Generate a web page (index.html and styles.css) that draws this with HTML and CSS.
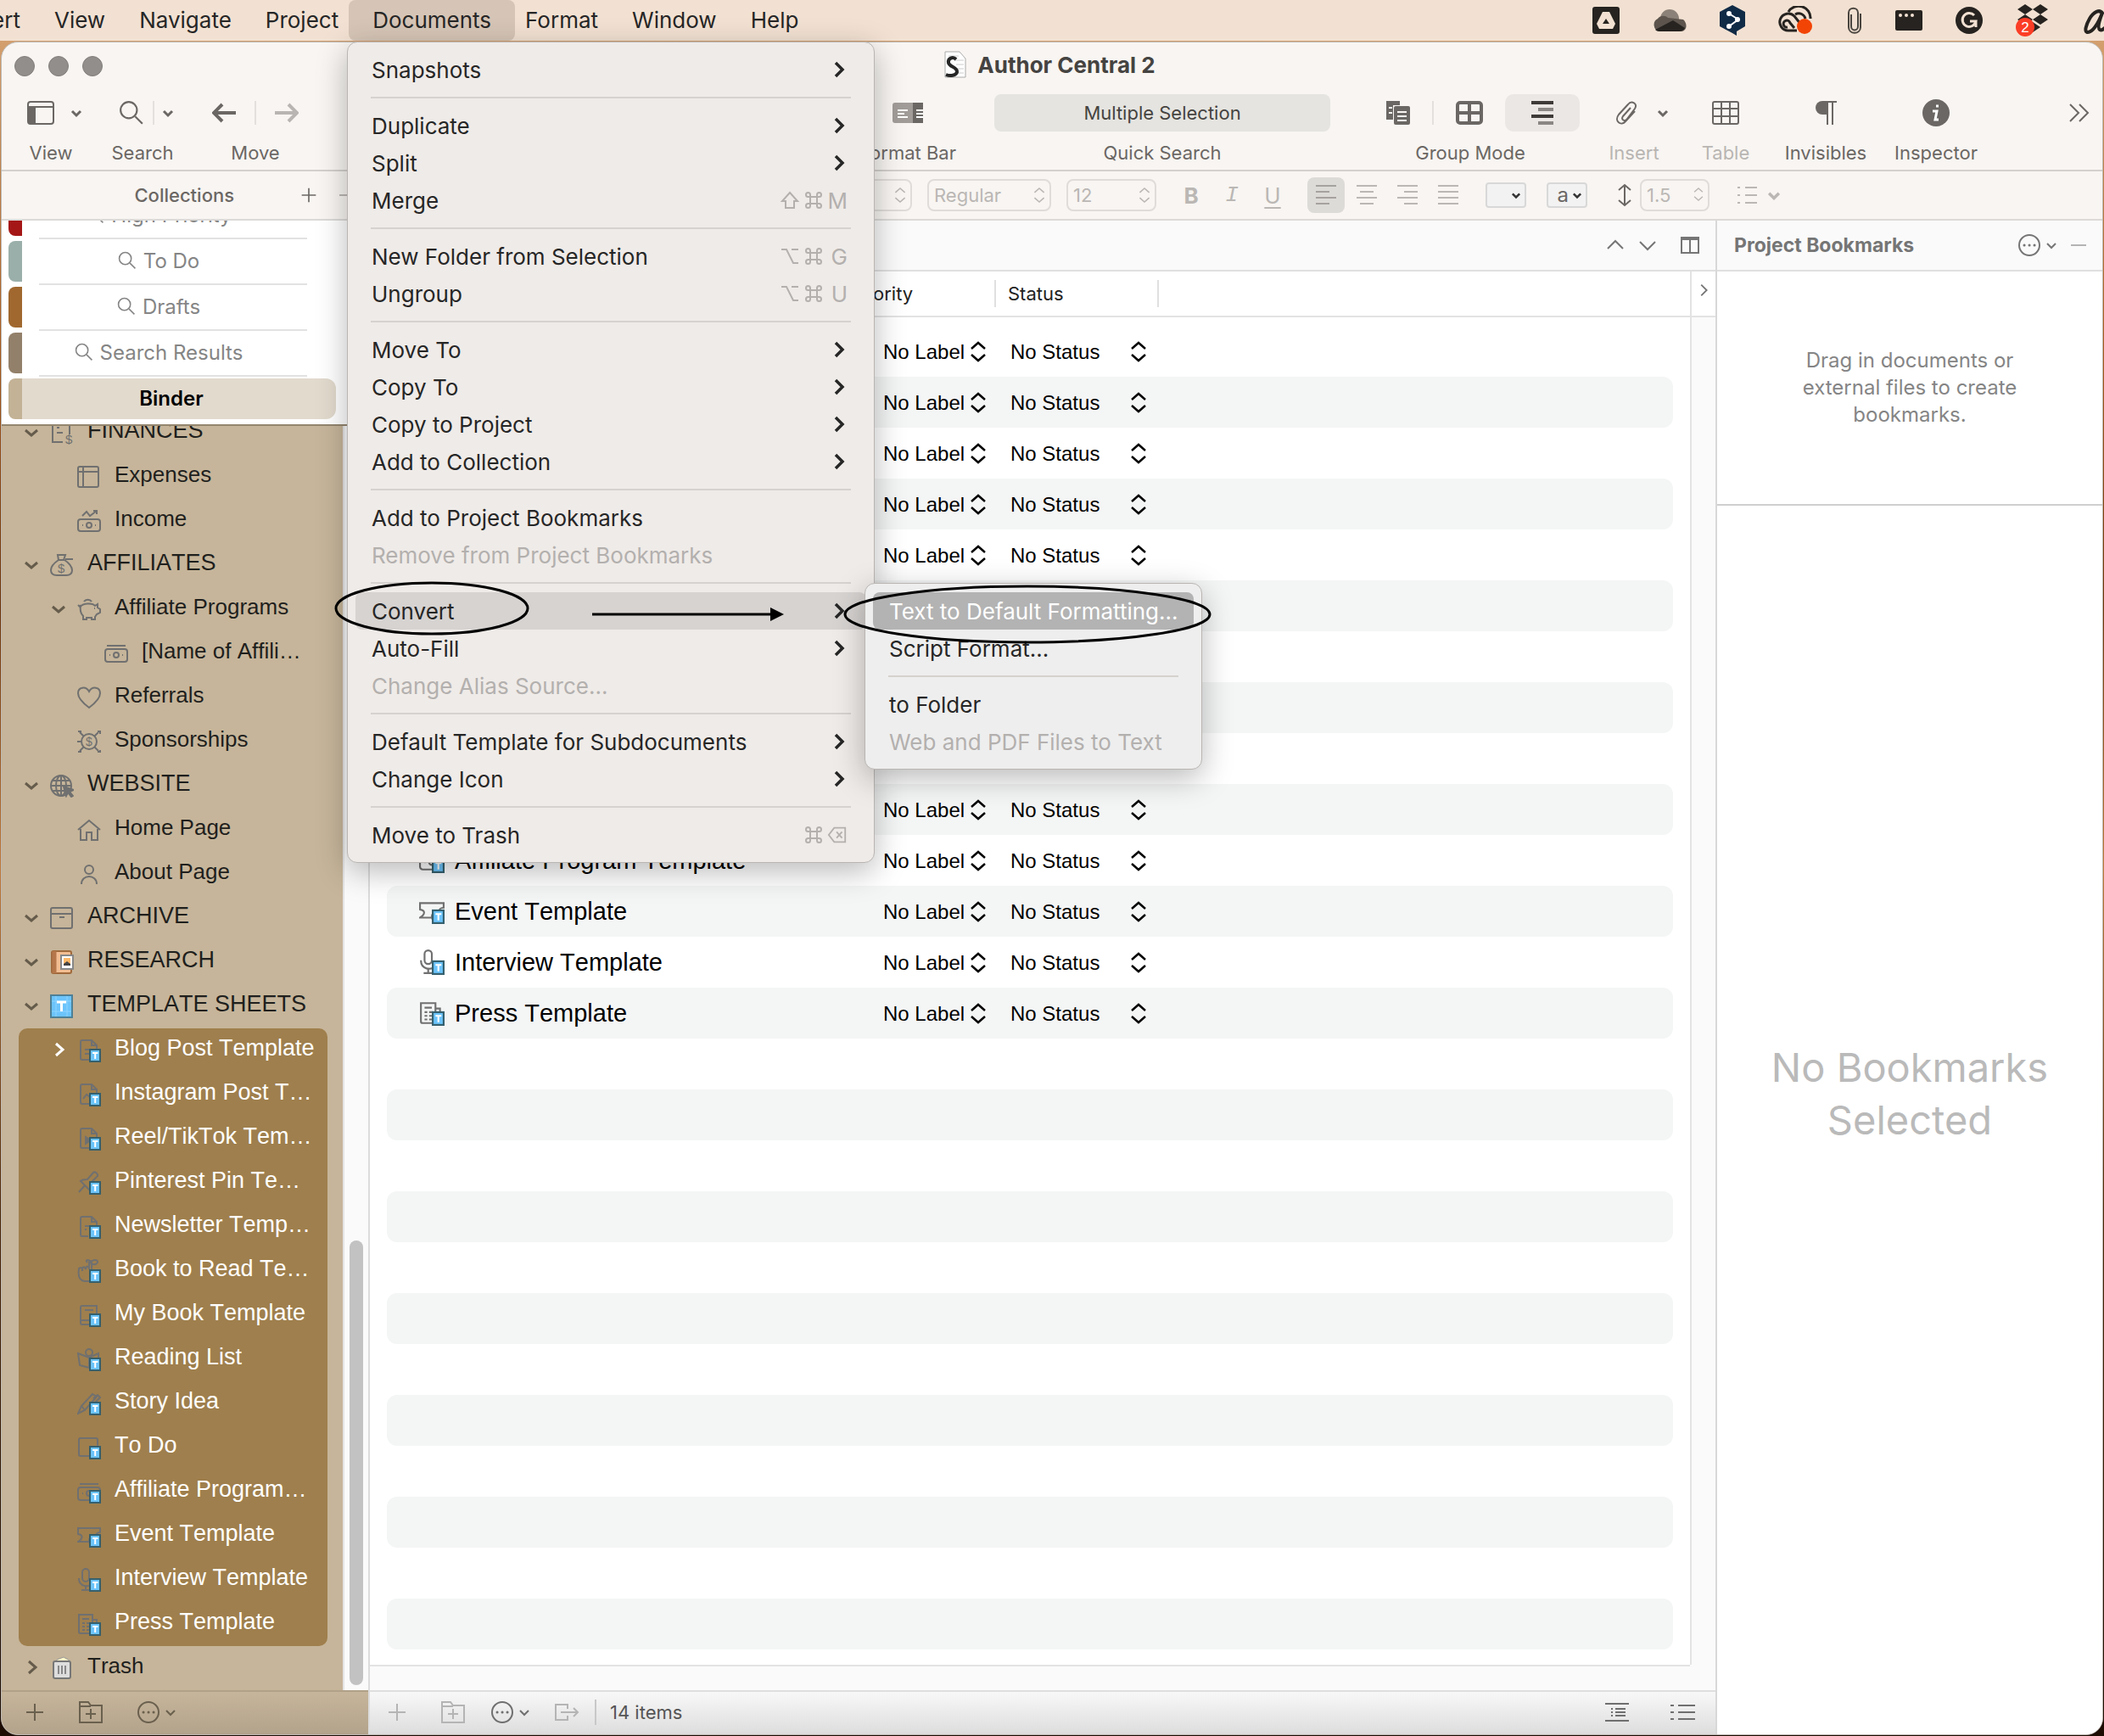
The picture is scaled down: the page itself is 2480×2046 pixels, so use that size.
FILE: index.html
```html
<!DOCTYPE html>
<html lang="en">
<head>
<meta charset="utf-8">
<title>Author Central 2</title>
<link rel="stylesheet" href="styles.css">
</head>
<body>
<svg class="symbols" aria-hidden="true">
  <symbol id="down" viewBox="0 0 24 24"><path d="M7 10l5 5 5-5"/></symbol>
  <symbol id="right" viewBox="0 0 24 24"><path d="M9 5l7 7-7 7"/></symbol>
  <symbol id="opened" viewBox="0 0 28 28"><path d="M7 11l7 6 7-6"/></symbol>
  <symbol id="closed" viewBox="0 0 28 28"><path d="M11 6l8 7-8 7"/></symbol>
  <symbol id="submenu-arrow" viewBox="0 0 24 24"><path d="M8 4l8 8-8 8"/></symbol>
  <symbol id="updown" viewBox="0 0 20 28"><path d="M3 10l7-6 7 6M3 18l7 6 7-6"/></symbol>
  <symbol id="picker" viewBox="0 0 20 28"><path d="M2 11l8-7 8 7M2 18l8 7 8-7"/></symbol>
  <symbol id="glass" viewBox="0 0 28 28"><circle cx="11" cy="11" r="9"/><path d="M18 18l8 8"/></symbol>
  <symbol id="plus" viewBox="0 0 24 24"><path d="M2 12h20M12 2v20"/></symbol>
  <symbol id="dots" viewBox="0 0 28 28"><circle cx="14" cy="14" r="12"/><path class="dot" d="M8 14h.1M14 14h.1M20 14h.1"/></symbol>
  <symbol id="addfolder" viewBox="0 0 30 28"><path d="M2 26V2h10l3 4h13v20zM2 7h13M15 10v12M9 16h12"/></symbol>
  <symbol id="cmd" viewBox="0 0 24 24"><path d="M8 8V5.500a2.500 2.500 0 1 0-2.500 2.500H18.500a2.500 2.500 0 1 0-2.500-2.500V18.500a2.500 2.500 0 1 0 2.500-2.500H5.500a2.500 2.500 0 1 0 2.500 2.500z"/></symbol>
  <symbol id="shift" viewBox="0 0 24 24"><path d="M12 3l9 10h-4v8H7v-8H3z"/></symbol>
  <symbol id="opt" viewBox="0 0 24 24"><path d="M2 4h6l8 16h6M14 4h8"/></symbol>
  <symbol id="del" viewBox="0 0 26 24"><path d="M9 3h14v18H9l-7-9zM12 8l7 8M19 8l-7 8"/></symbol>
  <symbol id="lines" viewBox="0 0 26 26"><path d="M1 2h24M1 9h16M1 16h24M1 23h16"/></symbol>

  <symbol id="t" viewBox="0 0 28 28"><rect x="15" y="13" width="12" height="14" fill="#6cc4fb" stroke="#35606e" stroke-width="2"/><path d="M18 17h6.500M21.200 17v7" stroke="#fff" stroke-width="2"/></symbol>
  <symbol id="i-ledger" viewBox="0 0 28 28"><path d="M15 25H3V3h20v13M8 8h3M8 14h7"/><text x="18" y="27" font-size="15">$</text></symbol>
  <symbol id="i-table" viewBox="0 0 28 28"><rect x="1" y="2" width="24" height="24" rx="2"/><path d="M1 8h24M7 2v24"/></symbol>
  <symbol id="i-income" viewBox="0 0 28 28"><rect x="1" y="12" width="26" height="14" rx="3"/><circle cx="14" cy="19" r="3"/><path d="M6 19h1M21 19h1M6 8l5-5 4 5 8-6M19 2h4v4"/></symbol>
  <symbol id="i-bag" viewBox="0 0 28 28"><path d="M10 8C4 12 1 16 1 20c0 4 3 6 7 6h11c4 0 7-2 7-6s-4-9-9-12zM9 2h9l-2 6h-6zM18 7h9"/><text x="9" y="23" font-size="15">$</text></symbol>
  <symbol id="i-pig" viewBox="0 0 28 28"><path d="M4 11c2-4 14-5 17-1l3-2v4l3 2v4l-4 2-2 3v3h-4v-2h-6v2H7v-4c-3-3-4-7-3-13zM4 12L1 9M8 5c2-3 7-3 9 0M20 13h1"/></symbol>
  <symbol id="i-cash" viewBox="0 0 28 28"><rect x="1" y="9" width="26" height="15" rx="3"/><circle cx="14" cy="16" r="3"/><path d="M6 16h1M21 16h1M3 5h22"/></symbol>
  <symbol id="i-heart" viewBox="0 0 28 28"><path d="M14 26C6 20 1 15 1 9c0-7 9-9 13-2 4-7 13-5 13 2 0 6-5 11-13 17z"/></symbol>
  <symbol id="i-sponsor" viewBox="0 0 28 28"><circle cx="14" cy="14" r="9"/><path d="M0 14h5M3 3l5 5M25 3l-5 5M3 25l5-5M25 25l-5-5M1 2h3v3M24 2h3v3M1 26h3v-2M24 26h3v-2"/><text x="10" y="19" font-size="14">$</text></symbol>
  <symbol id="i-globe" viewBox="0 0 28 28"><circle cx="13" cy="14" r="12"/><ellipse cx="13" cy="14" rx="6" ry="12"/><path d="M13 2v24M1 14h24M3 8h20M3 20h20"/><path d="M16 15l12 4-5 2 4 5-2 1-4-5-2 4z" fill="#707070"/></symbol>
  <symbol id="i-home" viewBox="0 0 28 28"><path d="M1 14L14 3l13 11M4 13v13h7v-9h6v9h7V13"/></symbol>
  <symbol id="i-person" viewBox="0 0 28 28"><circle cx="14" cy="9" r="5"/><path d="M5 26c0-12 18-12 18 0"/></symbol>
  <symbol id="i-archive" viewBox="0 0 28 28"><rect x="1" y="2" width="25" height="24" rx="2"/><path d="M1 9h25M11 13h6"/></symbol>
  <symbol id="i-research" viewBox="0 0 28 28"><rect x="2" y="1" width="23" height="26" rx="2" fill="#f2bd92" stroke="#a06a3c"/><path d="M5 1v26" stroke="#b5774a" stroke-width="5"/><rect x="13" y="6" width="14" height="16" fill="#fff" stroke="#888"/><path d="M16 9h8v9h-8z" fill="#fcb96a" stroke="none"/><path d="M16 18v-2l4-3 4 3v2z" fill="#444" stroke="none"/></symbol>
  <symbol id="i-sheet" viewBox="0 0 28 28"><rect x="1" y="1" width="25" height="26" fill="#6cc4fb" stroke="#4f8096"/><path d="M7 2v24M20 2v24M2 8h23M2 20h23" stroke="#8fd4ff" stroke-width="1"/><path d="M8 9h11M13.500 9v11" stroke="#fff" stroke-width="3"/></symbol>
  <symbol id="i-doc" viewBox="0 0 28 28"><path d="M16 25H6a2 2 0 0 1-2-2V4a2 2 0 0 1 2-2h11l6 6v6M17 2v6h6M9 13h8M9 18h5"/></symbol>
  <symbol id="i-image" viewBox="0 0 28 28"><path d="M16 25H6a2 2 0 0 1-2-2V4a2 2 0 0 1 2-2h11l6 6v6M17 2v6h6M7 19l4-5 4 3"/></symbol>
  <symbol id="i-play" viewBox="0 0 28 28"><path d="M16 25H6a2 2 0 0 1-2-2V4a2 2 0 0 1 2-2h11l6 6v6M17 2v6h6"/><path d="M10 12l6 4-6 4z" fill="#707070"/></symbol>
  <symbol id="i-pin" viewBox="0 0 28 28"><path d="M2 25l7-8M15 23L4 12c2-2 5-2 8-2l7-8c2-2 6 2 5 4l-8 8"/></symbol>
  <symbol id="i-news" viewBox="0 0 28 28"><path d="M13 25H6a2 2 0 0 1-2-2V4a2 2 0 0 1 2-2h11l6 6v6M17 2v6h6M9 13h8M9 17h2"/></symbol>
  <symbol id="i-hand" viewBox="0 0 28 28"><path d="M14 26H9c-8-1-8-9-7-15 3-2 4-1 4 3 0-6 3-6 4-2 1-5 4-4 4 0V5c0-4 3-4 3 0v8M12 4c-4-4 3-4 4 0 2-4 9-4 8 0-2 3-6 3-8 0"/></symbol>
  <symbol id="i-book" viewBox="0 0 28 28"><path d="M14 25H6a2 2 0 0 1-2-2V5a2 2 0 0 1 2-2h17v11M5 20h9M9 8h10"/></symbol>
  <symbol id="i-reader" viewBox="0 0 28 28"><circle cx="14" cy="6" r="4"/><path d="M14 24V12L1 7l2 14 11 3M14 12l11-5v7"/></symbol>
  <symbol id="i-pencils" viewBox="0 0 28 28"><path d="M1 26l4-9L18 3l5 3L9 22zM5 17l4 5M19 8l5-4 3 3-9 9"/></symbol>
  <symbol id="i-rect" viewBox="0 0 28 28"><path d="M14 24H4a2 2 0 0 1-2-2V5a2 2 0 0 1 2-2h18a2 2 0 0 1 2 2v9"/></symbol>
  <symbol id="i-ticket" viewBox="0 0 28 28"><path d="M14 21H1c6-4 6-8 0-9V5h26v5c-3 0-5 2-5 4M17 14c-4 4-4 8 0 12"/></symbol>
  <symbol id="i-mic" viewBox="0 0 28 28"><rect x="6" y="1" width="8" height="15" rx="4"/><path d="M2 12c0 11 12 10 13 8M10 20v6M5 26h9"/></symbol>
  <symbol id="i-press" viewBox="0 0 28 28"><path d="M14 25H4a2 2 0 0 1-2-2V3h16v10M18 9h5v5M6 8h8M6 13h3M11 13h4M6 17h3M11 17h3M6 21h3M11 21h3"/></symbol>
  <symbol id="i-trash" viewBox="0 0 28 28"><path d="M8 4l8-3 7 4v3H7z" fill="#fff6c8" stroke="#999" stroke-width="1"/><rect x="4" y="6" width="20" height="20" rx="2" fill="#ddd" stroke="#777"/><path d="M10 11v10M14 11v10M18 11v10" stroke="#888"/></symbol>
</svg>

<header class="menubar">
  <nav class="menus" aria-label="Menu bar">
    <button>Insert</button><button>View</button><button>Navigate</button><button>Project</button><button class="open" aria-expanded="true">Documents</button><button>Format</button><button>Window</button><button>Help</button>
  </nav>
  <div class="status-icons">
    <svg width="32" height="32" viewBox="0 0 32 32"><rect width="32" height="32" rx="3" fill="#262320"/><path d="M12 6h8l7 14-3 6H8l-3-6z" fill="#f2e1d2"/><path d="M16 14l4 6h-8z" fill="#262320"/></svg>
    <svg width="40" height="28" viewBox="0 0 40 28"><circle cx="20" cy="12" r="11" fill="#8c8178"/><path d="M8 27a8 8 0 0 1-2-15c3-4 9-4 12-1l18 2c5 4 5 13-2 14z" fill="#5c544d"/><path d="M3 25L24 14l14 9c-2 4-6 4-8 4H8c-2 0-4-1-5-2z" fill="#262320"/></svg>
    <svg width="30" height="36" viewBox="0 0 30 36"><path d="M15 0l15 8v17l-10 6v5l-5-3L0 25V8z" fill="#102b46"/><path d="M11 10l11 7-11 8" stroke="#fff" stroke-width="2" fill="none"/><g fill="#fff"><circle cx="11" cy="10" r="3"/><circle cx="21" cy="17" r="3"/><circle cx="11" cy="25" r="3"/></g></svg>
    <svg width="42" height="34" viewBox="0 0 42 34"><g fill="none" stroke="#262320" stroke-width="3"><path d="M22 29H12A10 10 0 1 1 19 12l8 10"/><path d="M19 26l-5-6a4 4 0 1 0-3 5"/><path d="M12 7a14 14 0 0 1 26 8M20 10c5-3 11 0 12 5"/></g><circle cx="31" cy="24" r="9" fill="#f24405"/></svg>
    <svg width="18" height="32" viewBox="0 0 18 32"><path d="M5 9v14c0 6 8 6 8 0V7C13 0 2 0 2 7v17c0 9 14 9 14 0V8" fill="none" stroke="#4a4540" stroke-width="2"/></svg>
    <svg width="32" height="24" viewBox="0 0 32 24"><rect width="32" height="24" rx="2" fill="#262320"/><g fill="#f2e1d2"><circle cx="6" cy="6" r="2"/><circle cx="13" cy="6" r="2"/><circle cx="20" cy="6" r="2"/></g></svg>
    <svg width="32" height="32" viewBox="0 0 32 32"><circle cx="16" cy="16" r="16" fill="#262320"/><path d="M22 10a8 8 0 1 0 2 7h-7M24 17v7" fill="none" stroke="#f2e1d2" stroke-width="3"/></svg>
    <svg width="40" height="42" viewBox="0 0 40 42"><path d="M11 2l9 6-9 6-9-6zM29 2l9 6-9 6-9-6zM11 14l9 6-9 6-9-6zM29 14l9 6-9 6-9-6zM20 23l9 6-9 6-9-6z" fill="#262320"/><circle cx="11" cy="29" r="11" fill="#fb3d26"/><text class="badge-count" x="11" y="35" text-anchor="middle" font-size="17">2</text></svg>
    <svg width="30" height="34" viewBox="0 0 30 34"><path d="M24 10C20 2 12 8 8 15S1 31 6 31s12-9 17-23c-3 8-6 18-3 20s7-3 12-8" fill="none" stroke="#262320" stroke-width="4"/></svg>
  </div>
</header>

<main class="window">
  <div class="titlebar">
    <div class="lights"><i></i><i></i><i></i></div>
    <h1><svg width="26" height="32" viewBox="0 0 26 32"><path d="M1 1h17l7 8v22H1z" fill="#fff" stroke="#aaa"/><path d="M5 6h12M12 11h11M14 16h9M15 21h8M12 26h11" stroke="#ccc"/><path d="M14 10C10 6 4 9 5 14s11 5 10 11c-1 4-8 5-13 3" fill="none" stroke="#262626" stroke-width="4"/></svg>Author Central 2</h1>
  </div>

  <div class="toolbar">
    <div class="tool view"><div class="tool-icons"><svg width="32" height="28" viewBox="0 0 32 28"><rect x="1" y="1" width="30" height="26" rx="3"/><path d="M1 7h30M9 7v20"/><path d="M2 8h7v18H3z" fill="#6b6764"/></svg><svg class="chev" width="24" height="24"><use href="#down"/></svg></div><span>View</span></div>
    <div class="tool search"><div class="tool-icons"><svg width="30" height="30"><use href="#glass"/></svg><b class="split"></b><svg class="chev" width="24" height="24"><use href="#down"/></svg></div><span>Search</span></div>
    <div class="tool move"><div class="tool-icons"><svg class="thick" width="28" height="24" viewBox="0 0 28 24"><path d="M12 2L2 12l10 10M2 12h26"/></svg><b class="split"></b><svg class="thick dim" width="28" height="24" viewBox="0 0 28 24"><path d="M16 2l10 10-10 10M26 12H0"/></svg></div><span>Move</span></div>
    <div class="tool formatbar"><div class="tool-icons"><svg width="36" height="24" viewBox="0 0 36 24"><rect width="36" height="24" rx="3" fill="#a19c98" stroke="none"/><path d="M24 0h12v24H24z" fill="#6b6764" stroke="none"/><path d="M6 9h12M6 13h8M6 17h12M28 9h8M28 13h8M28 17h8" stroke="#fff"/></svg></div><span>Format Bar</span></div>
    <div class="tool quick"><input id="quick" type="text" value="Multiple Selection"><label for="quick">Quick Search</label></div>
    <div class="tool group"><div class="tool-icons"><svg width="28" height="28" viewBox="0 0 28 28"><path d="M0 0h16v5H8v17H0z" fill="#6b6764" stroke="none"/><rect x="9" y="6" width="19" height="22" rx="2" fill="#6b6764" stroke="none"/><path d="M13 13h11M13 18h11M13 23h11M3 8h4M3 14h4" stroke="#f8f5f2"/></svg><b class="split"></b><svg class="boldline" width="32" height="28" viewBox="0 0 32 28"><rect x="2" y="2" width="28" height="24" rx="3"/><path d="M16 2v24M2 14h28"/></svg><button class="mode" aria-label="Outline"><svg width="30" height="28" viewBox="0 0 30 28"><path d="M2 2h26M2 18h26" stroke="#3d3a38" stroke-width="4"/><path d="M10 10h18M10 26h18" stroke="#8b8784" stroke-width="4"/></svg></button></div><span>Group Mode</span></div>
    <div class="tool insert off"><div class="tool-icons"><svg width="26" height="28" viewBox="0 0 26 28"><path d="M18 8L9 18c-3 4 2 7 5 3l9-12c4-6-4-10-8-5L4 16c-6 8 3 14 8 8l11-12"/></svg><svg class="chev" width="24" height="24"><use href="#down"/></svg></div><span>Insert</span></div>
    <div class="tool table off"><div class="tool-icons"><svg width="32" height="28" viewBox="0 0 32 28"><rect x="1" y="1" width="30" height="26" rx="2"/><path d="M1 9h30M1 18h30M11 1v26M21 1v26"/></svg></div><span>Table</span></div>
    <div class="tool wide"><div class="tool-icons"><svg width="26" height="28" viewBox="0 0 26 28"><path d="M26 1H10M15 1v27M21 1v27"/><path d="M15 0H9a8 8 0 0 0 0 16h6z" fill="#6b6764" stroke="none"/></svg></div><span>Invisibles</span></div>
    <div class="tool wide"><div class="tool-icons"><svg width="32" height="32" viewBox="0 0 32 32"><circle cx="16" cy="16" r="16" fill="#6b6764" stroke="none"/><path d="M16 8h3M12 14h5l-2 10h4" stroke="#fff" stroke-width="3"/></svg></div><span>Inspector</span></div>
    <button class="more" aria-label="More"><svg width="26" height="24" viewBox="0 0 26 24"><path d="M2 2l10 10L2 22M13 2l10 10-10 10"/></svg></button>
  </div>

  <div class="formatrow">
    <div class="coll-head"><h2>Collections</h2><button aria-label="Add"><svg width="20" height="20"><use href="#plus"/></svg></button><button aria-label="Remove"><svg width="20" height="20" viewBox="0 0 20 20"><path d="M2 10h16"/></svg></button></div>
    <div class="format-tools">
      <div class="pick family"><select aria-label="Font" disabled><option></option></select><svg width="16" height="26"><use href="#updown"/></svg></div>
      <div class="pick style"><select aria-label="Style" disabled><option>Regular</option></select><svg width="16" height="26"><use href="#updown"/></svg></div>
      <div class="pick size"><select aria-label="Size" disabled><option>12</option></select><svg width="16" height="26"><use href="#updown"/></svg></div>
      <div class="biu"><button><b>B</b></button><button class="ital">I</button><button class="under">U</button></div>
      <div class="aligns"><button class="on" aria-label="Left"><svg width="26" height="26"><use href="#lines"/></svg></button><button aria-label="Center"><svg width="26" height="26" viewBox="0 0 26 26"><path d="M1 2h24M5 9h16M1 16h24M5 23h16"/></svg></button><button aria-label="Right"><svg width="26" height="26" viewBox="0 0 26 26"><path d="M1 2h24M9 9h16M1 16h24M9 23h16"/></svg></button><button aria-label="Justify"><svg width="26" height="26" viewBox="0 0 26 26"><path d="M1 2h24M1 9h24M1 16h24M1 23h24"/></svg></button></div>
      <div class="wells"><button aria-label="Color"><svg class="chev" width="20" height="20"><use href="#down"/></svg></button><button>a<svg class="chev" width="20" height="20"><use href="#down"/></svg></button></div>
      <div class="spacing"><svg class="dark" width="28" height="28" viewBox="0 0 28 28"><path d="M14 2v24M7 8l7-6 7 6M7 20l7 6 7-6"/></svg><div class="pick lead"><select aria-label="Line spacing" disabled><option>1.5</option></select><svg width="14" height="24"><use href="#updown"/></svg></div></div>
      <button class="listbtn" aria-label="List"><svg width="24" height="24" viewBox="0 0 24 24"><path d="M10 3h14M10 12h14M10 21h14M1 3h3M1 12h3M1 21h3"/></svg><svg class="chev" width="28" height="28"><use href="#down"/></svg></button>
    </div>
  </div>

  <div class="panes">
    <aside class="sidebar">
      <ul class="collections">
        <li class="red"><span><svg width="22" height="22"><use href="#glass"/></svg>High Priority</span></li>
        <li class="teal"><span><svg width="22" height="22"><use href="#glass"/></svg>To Do</span></li>
        <li class="rust"><span><svg width="22" height="22"><use href="#glass"/></svg>Drafts</span></li>
        <li class="taupe"><span><svg width="22" height="22"><use href="#glass"/></svg>Search Results</span></li>
        <li class="current"><span>Binder</span></li>
      </ul>
      <div class="binder">
        <div class="tree">
          <div class="row caps"><svg class="tw"><use href="#opened"/></svg><svg class="ic"><use href="#i-ledger"/></svg><span>FINANCES</span></div>
          <div class="row l2"><svg class="ic"><use href="#i-table"/></svg><span>Expenses</span></div>
          <div class="row l2"><svg class="ic"><use href="#i-income"/></svg><span>Income</span></div>
          <div class="row caps"><svg class="tw"><use href="#opened"/></svg><svg class="ic"><use href="#i-bag"/></svg><span>AFFILIATES</span></div>
          <div class="row l2"><svg class="tw"><use href="#opened"/></svg><svg class="ic"><use href="#i-pig"/></svg><span>Affiliate Programs</span></div>
          <div class="row l3"><svg class="ic"><use href="#i-cash"/></svg><span>[Name of Affili…</span></div>
          <div class="row l2"><svg class="ic"><use href="#i-heart"/></svg><span>Referrals</span></div>
          <div class="row l2"><svg class="ic"><use href="#i-sponsor"/></svg><span>Sponsorships</span></div>
          <div class="row caps"><svg class="tw"><use href="#opened"/></svg><svg class="ic"><use href="#i-globe"/></svg><span>WEBSITE</span></div>
          <div class="row l2"><svg class="ic"><use href="#i-home"/></svg><span>Home Page</span></div>
          <div class="row l2"><svg class="ic"><use href="#i-person"/></svg><span>About Page</span></div>
          <div class="row caps"><svg class="tw"><use href="#opened"/></svg><svg class="ic"><use href="#i-archive"/></svg><span>ARCHIVE</span></div>
          <div class="row caps"><svg class="tw"><use href="#opened"/></svg><svg class="ic"><use href="#i-research"/></svg><span>RESEARCH</span></div>
          <div class="row caps"><svg class="tw"><use href="#opened"/></svg><svg class="ic"><use href="#i-sheet"/></svg><span>TEMPLATE SHEETS</span></div>
          <div class="picked">
            <div class="row l2"><svg class="tw"><use href="#closed"/></svg><svg class="ic"><use href="#i-doc"/><use href="#t"/></svg><span>Blog Post Template</span></div>
            <div class="row l2"><svg class="ic"><use href="#i-image"/><use href="#t"/></svg><span>Instagram Post T…</span></div>
            <div class="row l2"><svg class="ic"><use href="#i-play"/><use href="#t"/></svg><span>Reel/TikTok Tem…</span></div>
            <div class="row l2"><svg class="ic"><use href="#i-pin"/><use href="#t"/></svg><span>Pinterest Pin Te…</span></div>
            <div class="row l2"><svg class="ic"><use href="#i-news"/><use href="#t"/></svg><span>Newsletter Temp…</span></div>
            <div class="row l2"><svg class="ic"><use href="#i-hand"/><use href="#t"/></svg><span>Book to Read Te…</span></div>
            <div class="row l2"><svg class="ic"><use href="#i-book"/><use href="#t"/></svg><span>My Book Template</span></div>
            <div class="row l2"><svg class="ic"><use href="#i-reader"/><use href="#t"/></svg><span>Reading List</span></div>
            <div class="row l2"><svg class="ic"><use href="#i-pencils"/><use href="#t"/></svg><span>Story Idea</span></div>
            <div class="row l2"><svg class="ic"><use href="#i-rect"/><use href="#t"/></svg><span>To Do</span></div>
            <div class="row l2"><svg class="ic"><use href="#i-cash"/><use href="#t"/></svg><span>Affiliate Program…</span></div>
            <div class="row l2"><svg class="ic"><use href="#i-ticket"/><use href="#t"/></svg><span>Event Template</span></div>
            <div class="row l2"><svg class="ic"><use href="#i-mic"/><use href="#t"/></svg><span>Interview Template</span></div>
            <div class="row l2"><svg class="ic"><use href="#i-press"/><use href="#t"/></svg><span>Press Template</span></div>
          </div>
          <div class="row"><svg class="tw"><use href="#closed"/></svg><svg class="ic"><use href="#i-trash"/></svg><span>Trash</span></div>
        </div>
        <div class="gutter"><div class="thumb"></div></div>
      </div>
      <div class="foot side-foot">
        <button aria-label="Add"><svg width="24" height="24"><use href="#plus"/></svg></button>
        <button aria-label="New folder"><svg width="30" height="28"><use href="#addfolder"/></svg></button>
        <button aria-label="Actions"><svg width="28" height="28"><use href="#dots"/></svg><svg width="24" height="24"><use href="#down"/></svg></button>
      </div>
    </aside>

    <section class="editor">
      <div class="pane-head">
        <button aria-label="Previous"><svg width="24" height="24" viewBox="0 0 24 24"><path d="M3 16l9-9 9 9"/></svg></button>
        <button aria-label="Next"><svg width="24" height="24" viewBox="0 0 24 24"><path d="M3 8l9 9 9-9"/></svg></button>
        <button class="splitbtn" aria-label="Split"><svg width="24" height="24" viewBox="0 0 24 24"><path d="M2 3h20v18H2zM12 3v18"/><path d="M2 4h20" stroke-width="4"/></svg></button>
      </div>
      <div class="outline">
        <div class="list">
          <table>
            <colgroup><col class="c-title"><col class="c-prio"><col class="c-status"><col></colgroup>
            <thead><tr><th></th><th><span>Priority</span></th><th><span>Status</span></th><th></th></tr></thead>
            <tbody>
              <tr><td><div class="name"><svg><use href="#i-doc"/><use href="#t"/></svg>Blog Post Template</div></td><td><div class="cell"><select aria-label="Label"><option>No Label</option></select><svg><use href="#picker"/></svg></div></td><td><div class="cell"><select aria-label="Status"><option>No Status</option></select><svg><use href="#picker"/></svg></div></td><td></td></tr>
              <tr><td><div class="name"><svg><use href="#i-image"/><use href="#t"/></svg>Instagram Post Template</div></td><td><div class="cell"><select aria-label="Label"><option>No Label</option></select><svg><use href="#picker"/></svg></div></td><td><div class="cell"><select aria-label="Status"><option>No Status</option></select><svg><use href="#picker"/></svg></div></td><td></td></tr>
              <tr><td><div class="name"><svg><use href="#i-play"/><use href="#t"/></svg>Reel/TikTok Template</div></td><td><div class="cell"><select aria-label="Label"><option>No Label</option></select><svg><use href="#picker"/></svg></div></td><td><div class="cell"><select aria-label="Status"><option>No Status</option></select><svg><use href="#picker"/></svg></div></td><td></td></tr>
              <tr><td><div class="name"><svg><use href="#i-pin"/><use href="#t"/></svg>Pinterest Pin Template</div></td><td><div class="cell"><select aria-label="Label"><option>No Label</option></select><svg><use href="#picker"/></svg></div></td><td><div class="cell"><select aria-label="Status"><option>No Status</option></select><svg><use href="#picker"/></svg></div></td><td></td></tr>
              <tr><td><div class="name"><svg><use href="#i-news"/><use href="#t"/></svg>Newsletter Template</div></td><td><div class="cell"><select aria-label="Label"><option>No Label</option></select><svg><use href="#picker"/></svg></div></td><td><div class="cell"><select aria-label="Status"><option>No Status</option></select><svg><use href="#picker"/></svg></div></td><td></td></tr>
              <tr><td><div class="name"><svg><use href="#i-hand"/><use href="#t"/></svg>Book to Read Template</div></td><td><div class="cell"><select aria-label="Label"><option>No Label</option></select><svg><use href="#picker"/></svg></div></td><td><div class="cell"><select aria-label="Status"><option>No Status</option></select><svg><use href="#picker"/></svg></div></td><td></td></tr>
              <tr><td><div class="name"><svg><use href="#i-book"/><use href="#t"/></svg>My Book Template</div></td><td><div class="cell"><select aria-label="Label"><option>No Label</option></select><svg><use href="#picker"/></svg></div></td><td><div class="cell"><select aria-label="Status"><option>No Status</option></select><svg><use href="#picker"/></svg></div></td><td></td></tr>
              <tr><td><div class="name"><svg><use href="#i-reader"/><use href="#t"/></svg>Reading List</div></td><td><div class="cell"><select aria-label="Label"><option>No Label</option></select><svg><use href="#picker"/></svg></div></td><td><div class="cell"><select aria-label="Status"><option>No Status</option></select><svg><use href="#picker"/></svg></div></td><td></td></tr>
              <tr><td><div class="name"><svg><use href="#i-pencils"/><use href="#t"/></svg>Story Idea</div></td><td><div class="cell"><select aria-label="Label"><option>No Label</option></select><svg><use href="#picker"/></svg></div></td><td><div class="cell"><select aria-label="Status"><option>No Status</option></select><svg><use href="#picker"/></svg></div></td><td></td></tr>
              <tr><td><div class="name"><svg><use href="#i-rect"/><use href="#t"/></svg>To Do</div></td><td><div class="cell"><select aria-label="Label"><option>No Label</option></select><svg><use href="#picker"/></svg></div></td><td><div class="cell"><select aria-label="Status"><option>No Status</option></select><svg><use href="#picker"/></svg></div></td><td></td></tr>
              <tr><td><div class="name"><svg><use href="#i-cash"/><use href="#t"/></svg>Affiliate Program Template</div></td><td><div class="cell"><select aria-label="Label"><option>No Label</option></select><svg><use href="#picker"/></svg></div></td><td><div class="cell"><select aria-label="Status"><option>No Status</option></select><svg><use href="#picker"/></svg></div></td><td></td></tr>
              <tr><td><div class="name"><svg><use href="#i-ticket"/><use href="#t"/></svg>Event Template</div></td><td><div class="cell"><select aria-label="Label"><option>No Label</option></select><svg><use href="#picker"/></svg></div></td><td><div class="cell"><select aria-label="Status"><option>No Status</option></select><svg><use href="#picker"/></svg></div></td><td></td></tr>
              <tr><td><div class="name"><svg><use href="#i-mic"/><use href="#t"/></svg>Interview Template</div></td><td><div class="cell"><select aria-label="Label"><option>No Label</option></select><svg><use href="#picker"/></svg></div></td><td><div class="cell"><select aria-label="Status"><option>No Status</option></select><svg><use href="#picker"/></svg></div></td><td></td></tr>
              <tr><td><div class="name"><svg><use href="#i-press"/><use href="#t"/></svg>Press Template</div></td><td><div class="cell"><select aria-label="Label"><option>No Label</option></select><svg><use href="#picker"/></svg></div></td><td><div class="cell"><select aria-label="Status"><option>No Status</option></select><svg><use href="#picker"/></svg></div></td><td></td></tr>
              <tr><td></td><td></td><td></td><td></td></tr>
              <tr><td></td><td></td><td></td><td></td></tr>
              <tr><td></td><td></td><td></td><td></td></tr>
              <tr><td></td><td></td><td></td><td></td></tr>
              <tr><td></td><td></td><td></td><td></td></tr>
              <tr><td></td><td></td><td></td><td></td></tr>
              <tr><td></td><td></td><td></td><td></td></tr>
              <tr><td></td><td></td><td></td><td></td></tr>
              <tr><td></td><td></td><td></td><td></td></tr>
              <tr><td></td><td></td><td></td><td></td></tr>
              <tr><td></td><td></td><td></td><td></td></tr>
              <tr><td></td><td></td><td></td><td></td></tr>
            </tbody>
          </table>
        </div>
        <div class="vgutter"><button aria-label="Columns"><svg width="22" height="22"><use href="#right"/></svg></button></div>
      </div>
      <div class="foot main-foot">
        <button class="pale" aria-label="Add"><svg width="24" height="24"><use href="#plus"/></svg></button>
        <button class="pale" aria-label="New folder"><svg width="30" height="28"><use href="#addfolder"/></svg></button>
        <button aria-label="Actions"><svg width="28" height="28"><use href="#dots"/></svg><svg width="24" height="24"><use href="#down"/></svg></button>
        <button class="pale" aria-label="Export"><svg width="30" height="22" viewBox="0 0 30 22"><path d="M16 7V2H2v18h14v-5M8 11h20M23 6l5 5-5 5"/></svg></button>
        <span class="count">14 items</span>
        <button class="end" aria-label="Outline view"><svg width="30" height="26" viewBox="0 0 30 26"><path d="M1 3h28M1 23h28M13 9h12M13 13h12M13 17h12M8 9h2M8 13h2M8 17h2"/></svg></button>
        <button aria-label="List view"><svg width="30" height="24" viewBox="0 0 30 24"><path d="M10 4h20M10 12h20M10 20h20M1 4h4M1 12h4M1 20h4"/></svg></button>
      </div>
    </section>

    <aside class="inspector">
      <div class="pane-head"><h2>Project Bookmarks</h2><button aria-label="Options"><svg width="28" height="28"><use href="#dots"/></svg><svg width="24" height="24"><use href="#down"/></svg></button><button class="minus" aria-label="Collapse"><svg width="20" height="20" viewBox="0 0 20 20"><path d="M1 10h18"/></svg></button></div>
      <div class="drop"><p>Drag in documents or external files to create bookmarks.</p></div>
      <div class="none"><p>No Bookmarks Selected</p></div>
    </aside>
  </div>
</main>

<div class="menu documents" role="menu">
  <button>Snapshots<svg><use href="#submenu-arrow"/></svg></button>
  <hr>
  <button>Duplicate<svg><use href="#submenu-arrow"/></svg></button>
  <button>Split<svg><use href="#submenu-arrow"/></svg></button>
  <button>Merge<kbd><svg><use href="#shift"/></svg><svg><use href="#cmd"/></svg><i>M</i></kbd></button>
  <hr>
  <button>New Folder from Selection<kbd><svg><use href="#opt"/></svg><svg><use href="#cmd"/></svg><i>G</i></kbd></button>
  <button>Ungroup<kbd><svg><use href="#opt"/></svg><svg><use href="#cmd"/></svg><i>U</i></kbd></button>
  <hr>
  <button>Move To<svg><use href="#submenu-arrow"/></svg></button>
  <button>Copy To<svg><use href="#submenu-arrow"/></svg></button>
  <button>Copy to Project<svg><use href="#submenu-arrow"/></svg></button>
  <button>Add to Collection<svg><use href="#submenu-arrow"/></svg></button>
  <hr>
  <button>Add to Project Bookmarks</button>
  <button disabled>Remove from Project Bookmarks</button>
  <hr>
  <button class="hover">Convert<svg><use href="#submenu-arrow"/></svg></button>
  <button>Auto-Fill<svg><use href="#submenu-arrow"/></svg></button>
  <button disabled>Change Alias Source...</button>
  <hr>
  <button>Default Template for Subdocuments<svg><use href="#submenu-arrow"/></svg></button>
  <button>Change Icon<svg><use href="#submenu-arrow"/></svg></button>
  <hr>
  <button>Move to Trash<kbd><svg><use href="#cmd"/></svg><svg><use href="#del"/></svg></kbd></button>
</div>

<div class="menu submenu" role="menu">
  <button class="chosen">Text to Default Formatting...</button>
  <button>Script Format...</button>
  <hr>
  <button>to Folder</button>
  <button disabled>Web and PDF Files to Text</button>
</div>

<svg class="marks" width="1040" height="80" viewBox="0 0 1040 80" aria-hidden="true">
  <ellipse cx="116" cy="37" rx="113" ry="30"/>
  <ellipse cx="818" cy="44" rx="215" ry="33"/>
  <path d="M305 44h212"/><path d="M515 36l16 8-16 8z" fill="#000" stroke="none"/>
</svg>
</body>
</html>
```

FILE: styles.css
```css
* { box-sizing: border-box; }
body {
  margin: 0;
  min-height: 100vh;
  display: flex;
  flex-direction: column;
  position: relative;
  overflow-x: hidden;
  font-family: Inter, "Liberation Sans", sans-serif;
  font-size: 22px;
  color: #262626;
  background: linear-gradient(#d9a878, #a85a1c 20%, #6b3206 35%, #c07a3a 50%, #4a2404 70%, #1c0c02);
}
button, select, input { font: inherit; color: inherit; border: 0; background: none; padding: 0; margin: 0; }
select { appearance: none; opacity: 1; }
h1, h2, p, ul, li { margin: 0; padding: 0; list-style: none; font-weight: inherit; font-size: inherit; }
svg { fill: none; stroke: currentColor; stroke-width: 2; flex: none; display: block; }
svg text { fill: currentColor; stroke: none; font-family: "Liberation Sans", sans-serif; }
svg .badge-count { fill: #fff; }
.symbols { position: absolute; width: 0; height: 0; }
.dot { stroke-width: 3; stroke-linecap: round; }

/* Menu bar */
.menubar { height: 48px; display: flex; justify-content: space-between; background: #f2e1d2; overflow: hidden; }
.menus { display: flex; margin-left: -66px; font-size: 26px; line-height: 46px; }
.menus button { padding: 0 20px; height: 48px; }
.menus .open { padding: 0 28px; margin: 0 -8px; background: #d6c5b6; border-radius: 8px; }
.status-icons { display: flex; align-items: center; gap: 39px; margin-right: -5px; }
.status-icons svg { stroke: none; }

/* Window */
.window { flex: 1; margin: 1px 1px 3px 1px; display: flex; flex-direction: column; border: 1px solid #bdb8b3; border-radius: 20px; overflow: hidden; background: #f8f5f2; }
.titlebar { height: 56px; display: grid; grid-template-columns: 1fr auto 1fr; align-items: center; padding: 0 20px 0 15px; }
.lights { display: flex; gap: 16px; }
.lights i { width: 24px; height: 24px; border-radius: 50%; background: #928e8b; border: 1px solid #827e7b; }
.titlebar h1 { display: flex; align-items: center; gap: 13px; padding-bottom: 4px; font-size: 26px; font-weight: 700; color: #454341; }
.titlebar svg { stroke-width: 1; }

.toolbar { height: 96px; padding: 5px 14px 0 16px; display: flex; align-items: flex-start; gap: 18px; color: #6b6764; border-bottom: 2px solid #d3d0cd; }
.tool { display: flex; flex-direction: column; align-items: center; }
.tool-icons { align-self: stretch; height: 44px; display: flex; align-items: center; justify-content: center; }
.tool > span, .tool > label { margin-top: 13px; line-height: 24px; white-space: nowrap; }
.tool.off > span { color: #b8b5b2; }
.thick { stroke-width: 4; }
.boldline { stroke-width: 4; }
.chev { stroke-width: 3; }
.dim { color: #b8b5b2; }
.split { width: 2px; height: 28px; background: #e3e0dd; }
.view { width: 84px; }
.view .tool-icons, .search .tool-icons, .group .tool-icons, .insert .tool-icons { justify-content: flex-end; gap: 14px; }
.search { width: 84px; margin-left: 6px; }
.search .tool-icons { gap: 4px; }
.search .split { margin-left: 6px; }
.move { width: 110px; margin-left: 18px; }
.move .tool-icons { gap: 22px; }
.formatbar { width: 120px; margin-left: auto; }
.quick { width: 396px; margin: 0 18px 0 24px; }
.quick input { width: 100%; height: 44px; border-radius: 8px; background: #e5e4e0; text-align: center; color: #454341; font-size: 22px; }
.group { width: 258px; }
.group .tool-icons { gap: 26px; }
.mode { width: 88px; height: 44px; border-radius: 10px; background: #eae7e4; display: flex; align-items: center; justify-content: center; }
.insert { width: 92px; }
.insert .tool-icons { gap: 18px; }
.table { width: 88px; }
.wide { width: 112px; }
.more { margin-left: 82px; height: 44px; }

.formatrow { height: 58px; display: grid; grid-template-columns: 434px 1fr; border-bottom: 2px solid #dcdad8; color: #bab7b4; }
.coll-head { display: flex; align-items: center; justify-content: flex-end; gap: 24px; padding-right: 18px; color: #6b6764; }
.coll-head h2 { margin-right: 54px; font-weight: 500; }
.coll-head button:last-child { color: #bab7b4; }
.format-tools { display: flex; align-items: center; gap: 18px; padding-left: 160px; }
.format-tools button { display: flex; align-items: center; justify-content: center; }
.pick { position: relative; height: 38px; border: 2px solid #dfdcd9; border-radius: 8px; }
.pick select { width: 100%; height: 34px; padding-left: 6px; color: #bab7b4; }
.pick svg { position: absolute; right: 4px; top: 4px; }
.family { width: 479px; }
.style { width: 146px; }
.size { width: 106px; }
.lead { width: 82px; }
.biu { display: flex; gap: 2px; font-size: 26px; }
.biu button { width: 46px; }
.ital { font-family: "Liberation Mono", monospace; font-style: italic; }
.under { text-decoration: underline; text-underline-offset: 4px; }
.aligns { display: flex; gap: 4px; }
.aligns button { width: 44px; height: 42px; border-radius: 8px; }
.aligns .on { background: #dddbd8; color: #a5a29f; }
.wells { display: flex; gap: 24px; margin-left: 4px; }
.format-tools .wells button { width: 48px; height: 30px; border: 2px solid #d8d8d8; border-radius: 4px; background: #f2f2f2; color: #6b6764; font-size: 24px; line-height: 26px; justify-content: flex-end; }
.wells .chev { color: #333; }
.spacing { display: flex; align-items: center; gap: 4px; margin-left: 12px; }
.dark { color: #6b6764; }
.listbtn { gap: 6px; margin-left: 14px; }

.panes { flex: 1; display: grid; grid-template-columns: 434px 1fr 454px; }

/* Sidebar */
.sidebar { display: flex; flex-direction: column; border-right: 2px solid #dcdcdc; background: #c6b59a; min-width: 0; }
.collections { height: 242px; display: flex; flex-direction: column; justify-content: flex-end; gap: 6px; padding: 0 38px 6px 8px; overflow: hidden; background: #fff; border-bottom: 2px solid #94866f; color: #858585; font-size: 24px; }
.collections li { height: 48px; flex: none; border-left: 16px solid; border-radius: 8px 0 0 8px; padding-right: 18px; position: relative; }
.collections span { display: flex; align-items: center; justify-content: center; gap: 8px; height: 48px; padding-bottom: 2px; }
.collections span::after { content: ""; width: 22px; }
.collections li:not(.current)::after { content: ""; position: absolute; left: 20px; right: 34px; bottom: -4px; height: 2px; background: #e2e2e2; }
.collections .red { border-left-color: #a51616; }
.collections .teal { border-left-color: #9aafaa; }
.collections .rust { border-left-color: #a0682f; }
.collections .taupe { border-left-color: #93806a; }
.collections .current { border-left-color: #c3b296; border-radius: 8px 12px 12px 8px; background: #e2dacd; color: #000; font-weight: 600; }
.current span::after { display: none; }
.binder { flex: 1; display: flex; overflow: hidden; }
.tree { flex: 1; margin-top: -18px; padding: 0 18px 0 20px; font-family: "Liberation Sans", Arial, sans-serif; font-size: 26px; font-kerning: none; color: #1f1f1d; }
.row { height: 52px; display: flex; align-items: center; padding-left: 37px; position: relative; white-space: nowrap; }
.row span { padding-bottom: 6px; }
.caps { font-size: 27px; }
.l2 { padding-left: 69px; }
.l3 { padding-left: 101px; }
.ic { width: 28px; height: 28px; margin-right: 16px; color: #707070; }
.tw { width: 28px; height: 28px; margin: 0 8px 0 -36px; stroke-width: 3; color: #665c4c; }
.picked { background: #9f7f4d; border-radius: 10px; color: #fff; font-size: 27px; }
.picked .tw { color: #fff; }
.gutter { width: 30px; background: #fafafa; border-left: 2px solid #e4e4e4; display: flex; flex-direction: column; justify-content: flex-end; padding: 6px; }
.thumb { height: 524px; border-radius: 8px; background: #c2c2c2; }

.foot { height: 52px; flex: none; display: flex; align-items: center; padding-bottom: 2px; }
.foot button { display: flex; align-items: center; }
.side-foot { gap: 39px; padding-left: 27px; color: #6a604e; border-top: 2px solid #b0a188; background: linear-gradient(#c6b59a, #b3a38c); }

/* Editor */
.editor { display: flex; flex-direction: column; border-right: 2px solid #d8d8d8; min-width: 0; background: #fafafa; }
.pane-head { height: 60px; display: flex; align-items: center; justify-content: flex-end; background: #fafafa; border-bottom: 2px solid #e0e0e0; color: #757575; }
.editor .pane-head { gap: 14px; padding: 0 18px 0 0; }
.splitbtn { margin-left: 12px; }
.outline { flex: 1; display: flex; }
.list { flex: 1; padding: 0 20px 18px; border-bottom: 2px solid #e3e3e3; background: linear-gradient(#e3e3e3, #e3e3e3) 0 52px / 100% 2px no-repeat #fff; }
table { width: 100%; table-layout: fixed; border-spacing: 0; }
.c-title { width: 531px; }
.c-prio { width: 187px; }
.c-status { width: 192px; }
th { height: 64px; padding: 0 0 12px; font-weight: 400; text-align: left; color: #222; }
th span { display: flex; align-items: center; height: 32px; padding-left: 14px; border-right: 2px solid #e0e0e0; }
td { height: 60px; padding: 0; }
tbody tr:nth-child(even) td { background: #f4f5f5; }
tbody td:first-child { border-radius: 12px 0 0 12px; }
tbody td:last-child { border-radius: 0 12px 12px 0; }
.name { display: flex; align-items: center; gap: 12px; padding-left: 38px; font: 29px "Liberation Sans", Arial, sans-serif; font-kerning: none; color: #000; }
.name svg { width: 30px; height: 30px; color: #707070; }
.cell { position: relative; margin: 0 14px 0 17px; font: 24px "Liberation Sans", Arial, sans-serif; color: #000; }
td:nth-child(2) .cell { margin: 0 11px 0 54px; }
.cell select { width: 100%; height: 32px; }
.cell svg { position: absolute; right: 0; top: 2px; width: 20px; height: 28px; stroke-width: 2.500; pointer-events: none; }
.vgutter { width: 30px; margin-bottom: 2px; border-left: 2px solid #e3e3e3; }
.vgutter button { width: 100%; height: 54px; display: flex; justify-content: center; padding-top: 11px; background: #fff; border-bottom: 2px solid #e3e3e3; color: #757575; }
.main-foot { padding: 0 24px 2px 20px; gap: 39px; color: #6f6f6f; border-top: 2px solid #dedede; margin-top: 28px; background: linear-gradient(#f8f8f8, #dddddd); }
.main-foot .pale { color: #b4b4b4; }
.main-foot button:nth-child(3) { margin: 0 -16px 0 -10px; }
.count { margin-left: -21px; padding-left: 16px; border-left: 2px solid #c8c8c8; line-height: 30px; color: #555; }
.end { margin-left: auto; margin-right: 8px; }
.main-foot .end, .main-foot .end + button { stroke-width: 3; }

/* Inspector */
.inspector { display: flex; flex-direction: column; background: #fff; }
.inspector .pane-head { padding: 0 18px 0 20px; gap: 10px; }
.inspector h2 { flex: 1; font-weight: 700; font-size: 23px; }
.inspector button { display: flex; align-items: center; }
.minus { color: #b4b4b4; }
.drop { height: 276px; display: flex; align-items: center; justify-content: center; border-bottom: 2px solid #cfcfcf; color: #858585; font-size: 24px; line-height: 32px; text-align: center; }
.drop p { width: 290px; }
.none { flex: 1; display: flex; align-items: center; justify-content: center; text-align: center; font-size: 47px; line-height: 62px; color: #bababa; }
.none p { width: 380px; padding-bottom: 62px; }

/* Menus */
.menu { position: absolute; padding: 10px 9px; border: 1px solid #b9b5b2; border-radius: 12px; background: #efebe8; box-shadow: 0 10px 36px rgba(0, 0, 0, .28); font-size: 26px; }
.menu button { width: 100%; height: 44px; display: flex; align-items: center; justify-content: space-between; padding: 0 20px 0 19px; border-radius: 8px; text-align: left; white-space: nowrap; color: #262626; }
.menu button:disabled { color: #b3b0ae; }
.menu hr { height: 2px; margin: 10px 18px; border: 0; background: #d5d2cf; }
.menu button > svg { width: 24px; height: 24px; stroke-width: 3.500; }
.menu kbd { display: flex; align-items: center; gap: 4px; padding-right: 2px; font: inherit; color: #b3b0ae; }
.menu kbd svg { width: 24px; height: 24px; }
.menu kbd i { width: 24px; font-style: normal; text-align: right; }
.documents { left: 409px; top: 49px; width: 622px; }
.menu .hover { background: #d6d3d1; }
.submenu { left: 1019px; top: 687px; width: 398px; background: #eeeeee; }
.menu .chosen { background: #b3b3b3; color: #fff; }
.marks { position: absolute; left: 393px; top: 680px; stroke: #000; stroke-width: 3; }
```
